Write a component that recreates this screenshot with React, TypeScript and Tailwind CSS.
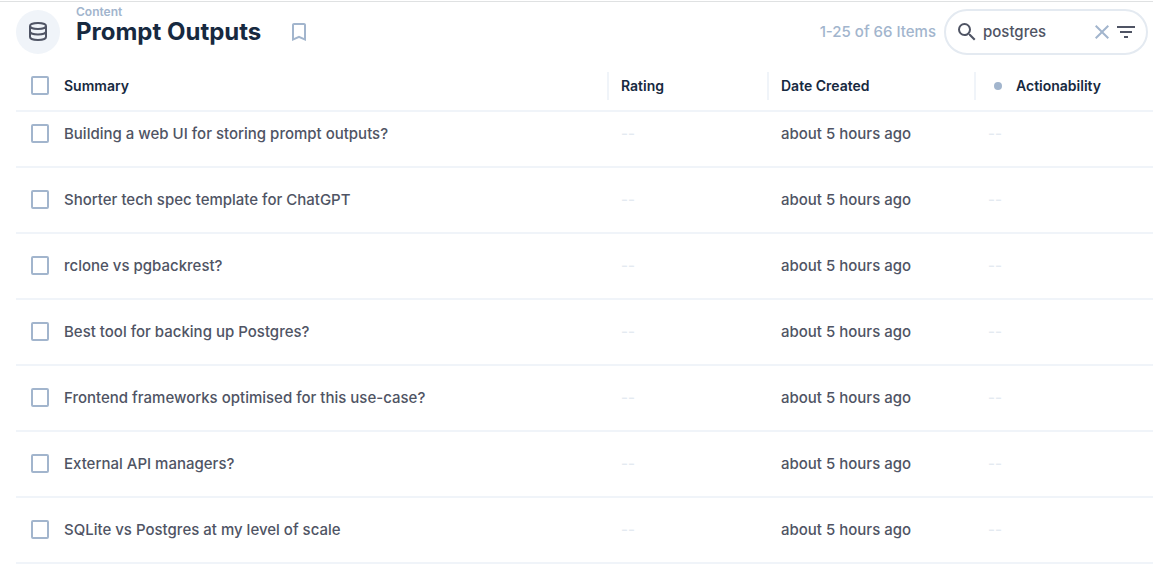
import { MdBookmarkBorder, MdClose, MdFilterList, MdSearch } from "react-icons/md";

const rows = [
  "Building a web UI for storing prompt outputs?",
  "Shorter tech spec template for ChatGPT",
  "rclone vs pgbackrest?",
  "Best tool for backing up Postgres?",
  "Frontend frameworks optimised for this use-case?",
  "External API managers?",
  "SQLite vs Postgres at my level of scale",
];

function DatabaseIcon() {
  return (
    <svg className="size-6" viewBox="0 0 24 24" fill="none" stroke="currentColor" strokeWidth="2" aria-hidden="true">
      <ellipse cx="12" cy="6" rx="8" ry="3" />
      <path d="M4 6v11c0 1.7 3.6 3 8 3s8-1.3 8-3V6" />
      <path d="M4 11.5c0 1.7 3.6 3 8 3s8-1.3 8-3" />
    </svg>
  );
}

function Checkbox({ label }: { label: string }) {
  return (
    <input
      type="checkbox"
      aria-label={label}
      className="mb-px block h-[19px] w-[18px] appearance-none rounded-xs border-2 border-[#a2b5cd] bg-white checked:bg-[#a2b5cd]"
    />
  );
}

function HeaderCell({ label, divider = true, dot = false }: { label: string; divider?: boolean; dot?: boolean }) {
  return (
    <th scope="col" className="border-b-2 border-[#f0f4f9] p-0 text-left font-semibold">
      <div className={divider ? "flex h-7 items-center border-r-2 border-[#f0f4f9] pl-3" : "flex h-7 items-center pl-3"}>
        {dot && <span className="mr-3.5 ml-1.5 size-2 rounded-full bg-[#a2b5cd]" />}
        {label}
      </div>
    </th>
  );
}

export default function App() {
  return (
    <main className="bg-white pt-px font-['Inter',sans-serif] text-[#4f5464]">
      <header className="flex h-[61px] items-center border-t border-[#dfe1e2] pr-[5px] pl-4">
        <span className="flex size-11 shrink-0 items-center justify-center rounded-full bg-[#f0f4f9]">
          <DatabaseIcon />
        </span>
        <div className="mb-4 ml-4">
          <a href="#content" className="block text-xs leading-4 font-semibold text-[#a2b5cd]">
            Content
          </a>
          <h1 className="text-2xl leading-6 font-bold text-[#172940]">Prompt Outputs</h1>
        </div>
        <button type="button" aria-label="Bookmark" className="ml-[26px] text-[#a2b5cd]">
          <MdBookmarkBorder className="size-6" />
        </button>
        <p className="ml-auto text-[15px] font-medium text-[#a2b5cd]">1-25 of 66 Items</p>
        <div className="ml-2 flex h-[46px] w-[204px] items-center rounded-full border-2 border-[#e4eaf1] pr-2 pl-[9px]">
          <MdSearch className="size-6 shrink-0" />
          <input
            type="text"
            aria-label="Search items"
            defaultValue="postgres"
            className="ml-1 w-full min-w-0 text-[15px] font-medium outline-none"
          />
          <button type="button" aria-label="Clear search" className="text-[#a2b5cd]">
            <MdClose className="size-6" />
          </button>
          <button type="button" aria-label="Filter">
            <MdFilterList className="size-6" />
          </button>
        </div>
      </header>

      <div className="pl-4">
        <table className="w-full table-fixed border-separate border-spacing-0">
          <colgroup>
            <col className="w-9" />
            <col />
            <col className="w-40" />
            <col className="w-[207px]" />
            <col className="w-[177px]" />
          </colgroup>
          <thead className="text-sm text-[#172940]">
            <tr className="h-[50px]">
              <th className="border-b-2 border-[#f0f4f9] p-0 pl-[15px]">
                <Checkbox label="Select all" />
              </th>
              <HeaderCell label="Summary" />
              <HeaderCell label="Rating" />
              <HeaderCell label="Date Created" />
              <HeaderCell label="Actionability" dot divider={false} />
            </tr>
          </thead>
          <tbody className="text-[15px] leading-6 font-medium">
            {rows.map((summary) => (
              <tr
                key={summary}
                className="h-[66px] first:h-14 *:border-b-2 *:border-[#f0f4f9] first:*:pb-2.5"
              >
                <td className="pl-[15px]">
                  <Checkbox label={summary} />
                </td>
                <td className="truncate px-3">{summary}</td>
                <td className="px-3 text-[#e4eaf1]">--</td>
                <td className="px-3">about 5 hours ago</td>
                <td className="px-3 text-[#e4eaf1]">--</td>
              </tr>
            ))}
          </tbody>
        </table>
      </div>
    </main>
  );
}
